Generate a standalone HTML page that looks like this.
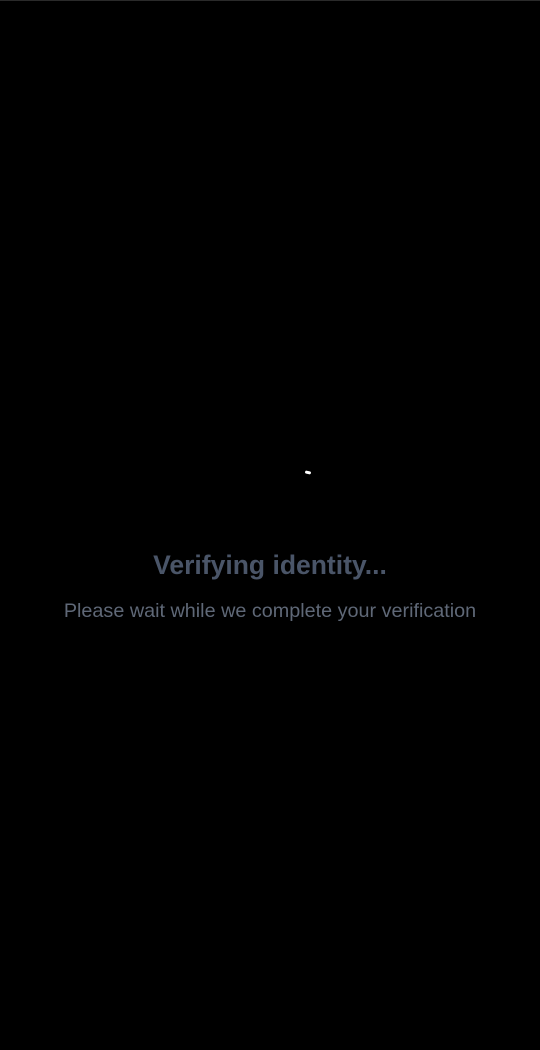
<!DOCTYPE html>
<html><head><style>
html,body{margin:0;padding:0;background:#000;width:540px;height:1050px;overflow:hidden;}
.top{position:absolute;top:0;left:0;width:540px;height:1px;background:#2a2a2a;}
.sp{position:absolute;left:305px;top:471px;width:6px;height:3px;background:#fff;border-radius:2px;transform:rotate(12deg);}
h1{position:absolute;top:547px;left:0;width:540px;margin:0;text-align:center;font:bold 26.5px/36px "Liberation Sans",sans-serif;color:#4a5568;}
p{position:absolute;top:599px;left:0;width:540px;margin:0;text-align:center;font:19.8px/24px "Liberation Sans",sans-serif;color:#5f6877;}
</style></head><body>
<div class="top"></div>
<div class="sp"></div>
<h1>Verifying identity...</h1>
<p>Please wait while we complete your verification</p>
</body></html>
